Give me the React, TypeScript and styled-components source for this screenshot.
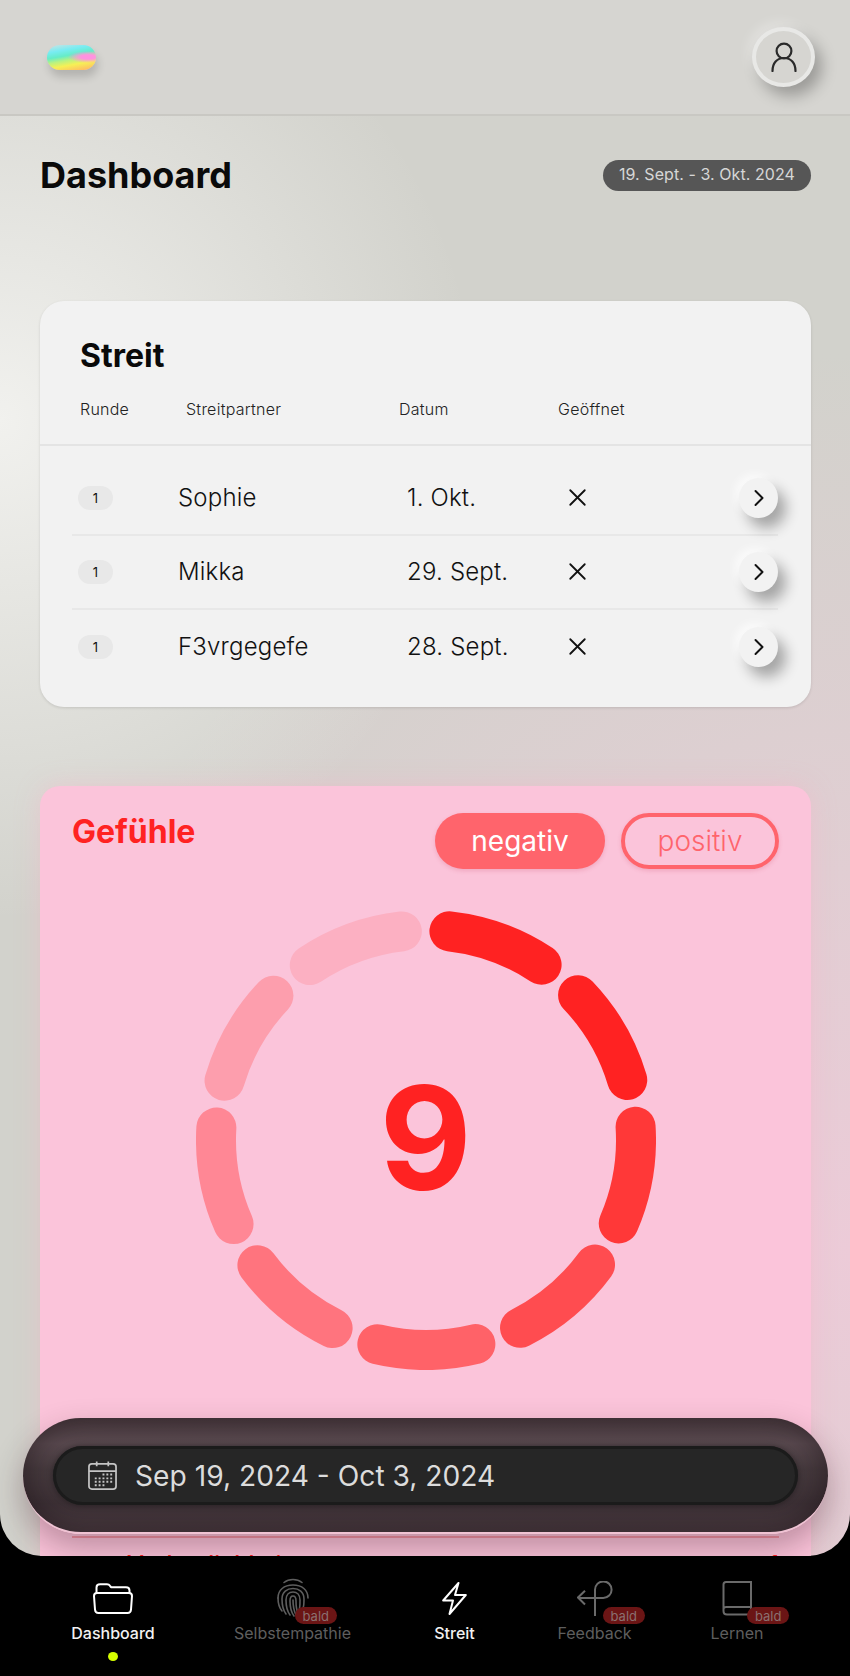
import * as React from "react";
import styled, { createGlobalStyle } from "styled-components";
import { ChevronRight, X } from "lucide-react";

const GlobalStyle = createGlobalStyle`
  html, body {
    margin: 0;
    padding: 0;
    background: #000;
  }
  * {
    box-sizing: border-box;
  }
`;

const Page = styled.div`
  width: 850px;
  height: 1676px;
  background: #000;
  overflow: hidden;
  font-family: Inter, "Liberation Sans", sans-serif;
`;

const Main = styled.main`
  position: relative;
  height: 1556px;
  overflow: hidden;
  border-radius: 0 0 42px 42px;
  background:
    radial-gradient(ellipse 480px 500px at 0 420px, #f1f1ee 0%, rgba(241, 241, 238, 0) 100%),
    radial-gradient(ellipse 800px 900px at 850px 1250px, #eccbd8 0%, rgba(236, 203, 216, 0) 100%),
    #d2d2cc;
`;

const Header = styled.header`
  height: 116px;
  padding: 0 35px 0 47px;
  display: flex;
  align-items: flex-start;
  justify-content: space-between;
  background: #d6d5d1;
  border-bottom: 2px solid #c9c8c3;
`;

const Logo = styled.div`
  width: 49px;
  height: 25px;
  margin-top: 45px;
  border-radius: 13px;
  background:
    radial-gradient(ellipse 20px 6px at 41px 12px, #ff92e0 0%, #ff92e0 35%, rgba(255, 146, 224, 0) 100%),
    linear-gradient(170deg, #d0e2e2 0%, #78ecf2 24%, #66ecc8 42%, #b8f282 56%, #f6f055 72%, #ffbc64 94%);
  box-shadow: 2px 7px 9px rgba(0, 0, 0, 0.16);
`;

const Avatar = styled.div`
  width: 63px;
  height: 60px;
  margin-top: 27px;
  border-radius: 50%;
  display: flex;
  align-items: center;
  justify-content: center;
  background: #d6d5d1;
  border: 4px solid #e8e8e6;
  box-shadow: 7px 9px 15px rgba(0, 0, 0, 0.28), -4px -5px 12px rgba(255, 255, 255, 0.3);
`;

const Content = styled.div`
  padding: 37px 39px 0 40px;
`;

const TitleRow = styled.div`
  display: flex;
  align-items: center;
  justify-content: space-between;
`;

const PageTitle = styled.h1`
  margin: 0;
  font-size: 36px;
  line-height: 44px;
  font-weight: 700;
  color: #0a0a0a;
`;

const RangePill = styled.div`
  height: 31px;
  padding: 0 16px 2px;
  display: flex;
  align-items: center;
  border-radius: 16px;
  background: #565656;
  color: #d6d6d6;
  font-size: 16px;
  letter-spacing: 0.07px;
`;

const StreitCard = styled.section`
  margin-top: 104px;
  height: 406px;
  border-radius: 24px;
  background: #f2f2f2;
  box-shadow: 0 1px 3px rgba(0, 0, 0, 0.12);
`;

const StreitHead = styled.div`
  padding: 36px 0 25px 40px;
  border-bottom: 2px solid #e4e4e4;
`;

const CardTitle = styled.h2`
  margin: 0 0 24px;
  font-size: 32px;
  line-height: 38px;
  font-weight: 700;
  color: #0a0a0a;
`;

const ColumnRow = styled.div`
  display: grid;
  grid-template-columns: 106px 213px 159px 1fr;
  font-size: 16px;
  line-height: 20px;
  font-weight: 300;
  letter-spacing: 0.25px;
  color: #222;
`;

const Rows = styled.div`
  padding: 16px 33px 0 32px;
`;

const Row = styled.div`
  height: 74px;
  padding-left: 6px;
  display: grid;
  grid-template-columns: 100px 229px 156px 1fr 39px;
  align-items: center;
  font-size: 24px;
  font-weight: 300;
  letter-spacing: 0.2px;
  color: #111;
  border-bottom: 2px solid #e8e8e8;

  &:last-child {
    border-bottom: none;
  }
`;

const RowText = styled.span`
  margin-bottom: 2px;
`;

const OpenedMark = styled(X)`
  margin-bottom: 2px;
`;

const RoundBadge = styled.div`
  width: 35px;
  height: 24px;
  display: flex;
  align-items: center;
  justify-content: center;
  border-radius: 12px;
  background: #e8e8e8;
  font-size: 13px;
  font-weight: 400;
`;

const RowButton = styled.div`
  width: 39px;
  height: 40px;
  display: flex;
  align-items: center;
  justify-content: center;
  border-radius: 50%;
  background: #f2f2f2;
  color: #111;
  box-shadow: 8px 10px 14px rgba(0, 0, 0, 0.32), -4px -4px 10px rgba(255, 255, 255, 0.7);
`;

const FeelingsCard = styled.section`
  margin-top: 79px;
  height: 900px;
  padding: 27px 32px 0;
  border-radius: 20px;
  background: #fbc4da;
  box-shadow: 0 0 24px rgba(255, 170, 195, 0.35);
`;

const FeelingsHead = styled.div`
  display: flex;
  align-items: flex-start;
  gap: 16px;
`;

const FeelingsTitle = styled.h2`
  margin: 0 auto 0 0;
  font-size: 32px;
  line-height: 38px;
  font-weight: 700;
  color: #ff2222;
`;

const ToggleButton = styled.div<{ $active?: boolean }>`
  height: 56px;
  width: ${(p) => (p.$active ? "170px" : "158px")};
  display: flex;
  align-items: center;
  justify-content: center;
  border-radius: 28px;
  font-size: 28px;
  font-weight: ${(p) => (p.$active ? 400 : 300)};
  color: ${(p) => (p.$active ? "#fff" : "#ff646c")};
  background: ${(p) => (p.$active ? "#ff646c" : "transparent")};
  border: ${(p) => (p.$active ? "none" : "4px solid #ff646c")};
  box-shadow: 0 2px 4px rgba(200, 60, 90, 0.2);
`;

const DonutWrap = styled.div`
  position: relative;
  width: 460px;
  height: 460px;
  margin: 41px auto 0;
  display: flex;
  align-items: center;
  justify-content: center;
`;

const DonutValue = styled.div`
  position: absolute;
  padding-bottom: 6px;
  font-size: 142px;
  font-weight: 700;
  line-height: 1;
  color: #ff2222;
`;

const ListDivider = styled.div`
  margin-top: 166px;
  height: 2px;
  background: rgba(225, 60, 70, 0.36);
`;

const FeelingRow = styled.div`
  display: flex;
  justify-content: space-between;
  padding: 12px 0 0 55px;
  font-size: 24px;
  line-height: 30px;
  font-weight: 500;
  color: #ff2222;
`;

const FloatBar = styled.div`
  position: absolute;
  left: 23px;
  right: 22px;
  bottom: 22px;
  height: 116px;
  padding: 28px 30px 0;
  border-radius: 58px;
  background: linear-gradient(180deg, #4b3c41 0%, #5a4a50 22%, #463a3e 45%, #3d3136 75%, #493a40 100%);
  border-bottom: 2px solid #efc3d3;
  box-shadow:
    0 14px 32px rgba(40, 10, 20, 0.3),
    inset 0 0 30px rgba(20, 10, 14, 0.5);
`;

const DateField = styled.div`
  height: 59px;
  padding-left: 35px;
  display: flex;
  align-items: center;
  gap: 18px;
  border-radius: 30px;
  background: #262626;
  color: #dcdcdc;
  font-size: 28.2px;
  box-shadow: inset 0 0 0 3px #1b1b1b, 0 0 6px rgba(0, 0, 0, 0.4);
`;

const Nav = styled.nav`
  height: 120px;
  padding: 22px 0 0 18px;
  display: grid;
  grid-template-columns: 190px 169px 155px 125px 160px;
  align-items: start;
  justify-items: center;
  background: #000;
`;

const NavItem = styled.div<{ $disabled?: boolean }>`
  display: flex;
  flex-direction: column;
  align-items: center;
  color: ${(p) => (p.$disabled ? "#5e5e5e" : "#f2f2f2")};
  font-size: 16px;
  line-height: 20px;
  font-weight: ${(p) => (p.$disabled ? 400 : 450)};
`;

const IconSlot = styled.div`
  position: relative;
  height: 40px;
  display: flex;
  align-items: center;
  justify-content: center;
  margin-bottom: 5px;
`;

const SoonBadge = styled.span<{ $left: number }>`
  position: absolute;
  top: 29px;
  left: ${(p) => p.$left}px;
  height: 17px;
  padding: 0 8px;
  display: flex;
  align-items: center;
  border-radius: 9px;
  background: #6b1515;
  color: #8a7070;
  font-size: 13px;
  font-weight: 400;
`;

const ActiveDot = styled.span`
  width: 10px;
  height: 9px;
  margin-top: 9px;
  border-radius: 50%;
  background: #d6ff00;
`;

const UserIcon = () => (
  <svg width="26" height="30" viewBox="0 0 26 30" fill="none" stroke="#2a2a2a" strokeWidth="2.2">
    <circle cx="13" cy="9" r="7.4" />
    <path d="M1.5 29 C1.5 21 6 16 13 16 C20 16 24.5 21 24.5 29" strokeLinecap="round" />
  </svg>
);

const CalendarIcon = () => (
  <svg width="29" height="29" viewBox="0 0 30 30" fill="none" stroke="#c4c4c4" strokeWidth="1.8">
    <rect x="1" y="3" width="28" height="26" rx="3" />
    <path d="M1 10.5 H29 M9 0.5 V5.5 M21 0.5 V5.5" />
    <path
      d="M15 14 h2 M19 14 h2 M23 14 h2 M7 18 h2 M11 18 h2 M15 18 h2 M19 18 h2 M23 18 h2 M7 21.5 h2 M11 21.5 h2 M15 21.5 h2 M19 21.5 h2 M23 21.5 h2 M7 25 h2 M11 25 h2 M15 25 h2"
      strokeWidth="2"
    />
  </svg>
);

const FolderIcon = () => (
  <svg width="40" height="31" viewBox="0 0 40 31" fill="none" stroke="#fff" strokeWidth="2" strokeLinejoin="round">
    <path d="M3.5 10 V4.5 Q3.5 1.2 7 1.2 H14 Q16 1.2 17 2.8 L18 4.2 H33 Q36.5 4.2 36.5 7.5 V10" />
    <path d="M4 10 H36 Q39 10 39 13 L38 26.5 Q37.8 30 34.5 30 H5.5 Q2.2 30 2 26.5 L1 13 Q1 10 4 10 Z" />
  </svg>
);

const FingerprintIcon = () => (
  <svg width="34" height="40" viewBox="0 0 34 40" fill="none" stroke="#5e5e5e" strokeWidth="1.6" strokeLinecap="round">
    <path d="M8 4.5 C13 0.5 21 0.5 26 4.5" />
    <path d="M2 20 C2 12 8 7 17 7 C26 7 32 12 32 20" />
    <path d="M2 20 C2 26 3.5 30 6 33" />
    <path d="M10 36 C7 32 6 27 6 21 C6 14 11 10.5 17 10.5 C23 10.5 28 14 28 21 C28 25 28 28 27 30" />
    <path d="M14 37 C11 33 10 28 10 22 C10 17 13 14 17 14 C21 14 24 17 24 22 C24 26 24 30 23 33" />
    <path d="M18 38 C15 34 14 28 14 23 C14 20 15 18 17 18 C19 18 20 20 20 23 C20 28 21 33 22 35" />
    <path d="M17 22 C17 28 18 33 20 37" />
  </svg>
);

const BoltIcon = () => (
  <svg width="25" height="33" viewBox="0 0 25 33" fill="none" stroke="#fff" strokeWidth="2" strokeLinejoin="round">
    <path d="M16.5 1 L1.2 18.5 H11 L7.5 32 L23.8 13 H13 Z" />
  </svg>
);

const FeedbackIcon = () => (
  <svg width="36" height="35" viewBox="0 0 36 35" fill="none" stroke="#6a6a6a" strokeWidth="2">
    <path d="M18 35 V8.8 A8.3 8.3 0 1 1 26.3 17 H1" />
    <path d="M8 9.7 L1 16.5 L8 23.5" />
  </svg>
);

const BookIcon = () => (
  <svg width="30" height="35" viewBox="0 0 30 35" fill="none" stroke="#6a6a6a" strokeWidth="2">
    <path d="M1.5 28 V3.5 Q1.5 1 4 1 H29 V33.5 H5 Q1.5 33.5 1.5 30 V28 Q1.5 26 4.5 26 H29" />
  </svg>
);

const CX = 230;
const CY = 230;
const RADIUS = 210;

const point = (deg: number) => {
  const rad = (deg * Math.PI) / 180;
  return `${CX + RADIUS * Math.sin(rad)} ${CY - RADIUS * Math.cos(rad)}`;
};

const segmentColors = [
  "#ff2222",
  "#ff2222",
  "#ff3838",
  "#ff4c50",
  "#ff6268",
  "#ff747e",
  "#ff8795",
  "#fd9ead",
  "#fcb0c2",
];

const Donut = () => (
  <svg width="460" height="460" viewBox="0 0 460 460" fill="none" strokeWidth="40" strokeLinecap="round">
    {segmentColors.map((color, i) => {
      const start = 6.4 + i * 40;
      return (
        <path key={i} d={`M ${point(start)} A ${RADIUS} ${RADIUS} 0 0 1 ${point(start + 27)}`} stroke={color} />
      );
    })}
  </svg>
);

const streitRows = [
  { name: "Sophie", date: "1. Okt." },
  { name: "Mikka", date: "29. Sept." },
  { name: "F3vrgegefe", date: "28. Sept." },
];

const App = () => {
  return (
    <Page>
      <GlobalStyle />
      <Main>
        <Header>
          <Logo />
          <Avatar>
            <UserIcon />
          </Avatar>
        </Header>
        <Content>
          <TitleRow>
            <PageTitle>Dashboard</PageTitle>
            <RangePill>19. Sept. - 3. Okt. 2024</RangePill>
          </TitleRow>
          <StreitCard>
            <StreitHead>
              <CardTitle>Streit</CardTitle>
              <ColumnRow>
                <span>Runde</span>
                <span>Streitpartner</span>
                <span>Datum</span>
                <span>Geöffnet</span>
              </ColumnRow>
            </StreitHead>
            <Rows>
              {streitRows.map((row) => (
                <Row key={row.name}>
                  <RoundBadge>1</RoundBadge>
                  <RowText>{row.name}</RowText>
                  <RowText>{row.date}</RowText>
                  <OpenedMark size={29} strokeWidth={1.5} />
                  <RowButton>
                    <ChevronRight size={28} strokeWidth={1.7} />
                  </RowButton>
                </Row>
              ))}
            </Rows>
          </StreitCard>
          <FeelingsCard>
            <FeelingsHead>
              <FeelingsTitle>Gefühle</FeelingsTitle>
              <ToggleButton $active>negativ</ToggleButton>
              <ToggleButton>positiv</ToggleButton>
            </FeelingsHead>
            <DonutWrap>
              <Donut />
              <DonutValue>9</DonutValue>
            </DonutWrap>
            <ListDivider />
            <FeelingRow>
              <span>Verletzlichkeit</span>
              <span>1</span>
            </FeelingRow>
          </FeelingsCard>
        </Content>
        <FloatBar>
          <DateField>
            <CalendarIcon />
            Sep 19, 2024 - Oct 3, 2024
          </DateField>
        </FloatBar>
      </Main>
      <Nav>
        <NavItem>
          <IconSlot>
            <FolderIcon />
          </IconSlot>
          Dashboard
          <ActiveDot />
        </NavItem>
        <NavItem $disabled>
          <IconSlot>
            <FingerprintIcon />
            <SoonBadge $left={19}>bald</SoonBadge>
          </IconSlot>
          Selbstempathie
        </NavItem>
        <NavItem>
          <IconSlot>
            <BoltIcon />
          </IconSlot>
          Streit
        </NavItem>
        <NavItem $disabled>
          <IconSlot>
            <FeedbackIcon />
            <SoonBadge $left={26}>bald</SoonBadge>
          </IconSlot>
          Feedback
        </NavItem>
        <NavItem $disabled>
          <IconSlot>
            <BookIcon />
            <SoonBadge $left={25}>bald</SoonBadge>
          </IconSlot>
          Lernen
        </NavItem>
      </Nav>
    </Page>
  );
};

export default App;
